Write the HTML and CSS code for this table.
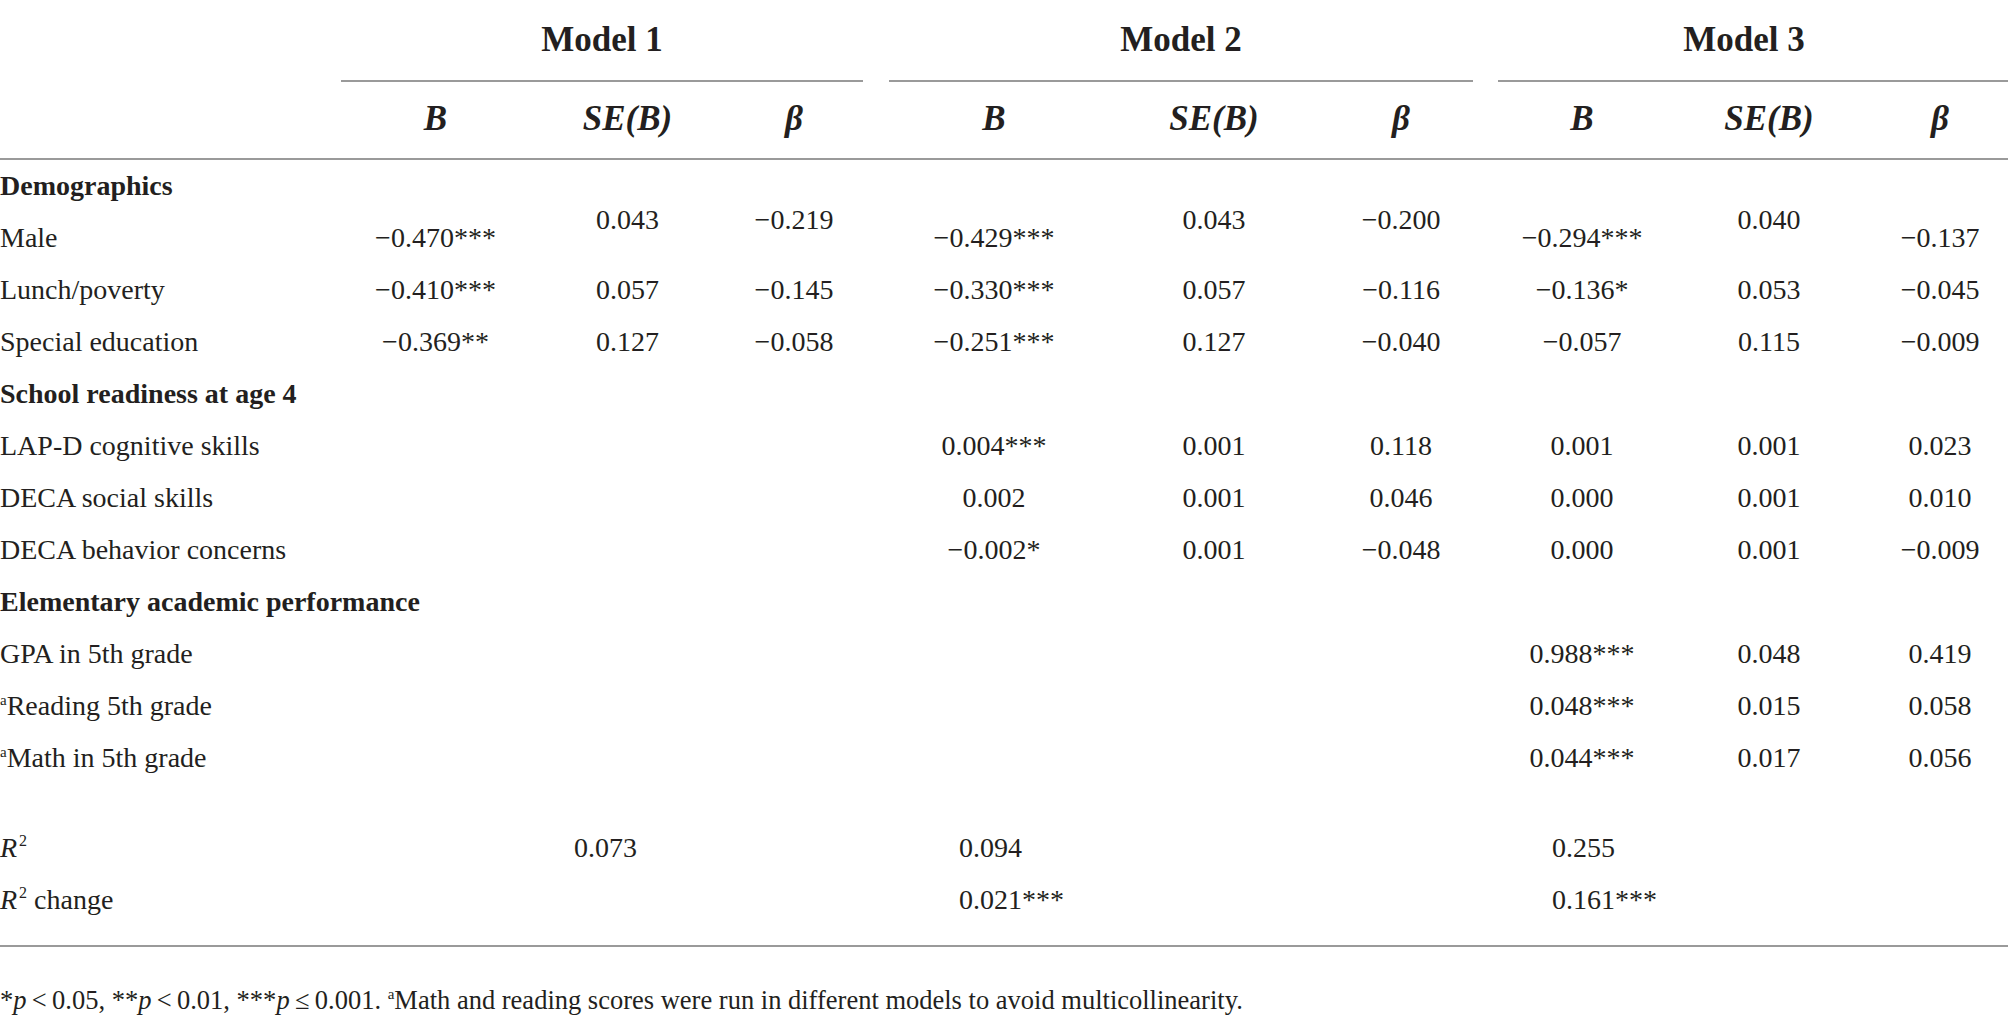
FILE: index.html
```html
<!DOCTYPE html>
<html lang="en">
<head>
<meta charset="utf-8">
<title>Regression models</title>
<link rel="stylesheet" href="styles.css">
</head>
<body>
<div class="table-wrap">
<table class="reg">
  <colgroup>
    <col class="c-label">
    <col class="c-m1b"><col class="c-m1se"><col class="c-m1beta">
    <col class="c-gap1">
    <col class="c-m2b"><col class="c-m2se"><col class="c-m2beta">
    <col class="c-gap2">
    <col class="c-m3b"><col class="c-m3se"><col class="c-m3beta">
  </colgroup>
  <thead>
    <tr class="models">
      <th></th>
      <th colspan="3" class="model">Model 1</th>
      <th class="gap"></th>
      <th colspan="3" class="model">Model 2</th>
      <th class="gap"></th>
      <th colspan="3" class="model model-last">Model 3</th>
    </tr>
    <tr class="stats">
      <th></th>
      <th>B</th><th>SE(B)</th><th>β</th>
      <th></th>
      <th>B</th><th>SE(B)</th><th>β</th>
      <th></th>
      <th>B</th><th>SE(B)</th><th>β</th>
    </tr>
  </thead>
  <tbody>
    <tr class="section"><td colspan="12">Demographics</td></tr>
    <tr>
      <td class="label">Male</td>
      <td>−0.470***</td><td class="raised">0.043</td><td class="raised">−0.219</td>
      <td></td>
      <td>−0.429***</td><td class="raised">0.043</td><td class="raised">−0.200</td>
      <td></td>
      <td>−0.294***</td><td class="raised">0.040</td><td>−0.137</td>
    </tr>
    <tr>
      <td class="label">Lunch/poverty</td>
      <td>−0.410***</td><td>0.057</td><td>−0.145</td>
      <td></td>
      <td>−0.330***</td><td>0.057</td><td>−0.116</td>
      <td></td>
      <td>−0.136*</td><td>0.053</td><td>−0.045</td>
    </tr>
    <tr>
      <td class="label">Special education</td>
      <td>−0.369**</td><td>0.127</td><td>−0.058</td>
      <td></td>
      <td>−0.251***</td><td>0.127</td><td>−0.040</td>
      <td></td>
      <td>−0.057</td><td>0.115</td><td>−0.009</td>
    </tr>
    <tr class="section"><td colspan="12">School readiness at age 4</td></tr>
    <tr>
      <td class="label">LAP-D cognitive skills</td>
      <td></td><td></td><td></td>
      <td></td>
      <td>0.004***</td><td>0.001</td><td>0.118</td>
      <td></td>
      <td>0.001</td><td>0.001</td><td>0.023</td>
    </tr>
    <tr>
      <td class="label">DECA social skills</td>
      <td></td><td></td><td></td>
      <td></td>
      <td>0.002</td><td>0.001</td><td>0.046</td>
      <td></td>
      <td>0.000</td><td>0.001</td><td>0.010</td>
    </tr>
    <tr>
      <td class="label">DECA behavior concerns</td>
      <td></td><td></td><td></td>
      <td></td>
      <td>−0.002*</td><td>0.001</td><td>−0.048</td>
      <td></td>
      <td>0.000</td><td>0.001</td><td>−0.009</td>
    </tr>
    <tr class="section"><td colspan="12">Elementary academic performance</td></tr>
    <tr>
      <td class="label">GPA in 5th grade</td>
      <td></td><td></td><td></td>
      <td></td>
      <td></td><td></td><td></td>
      <td></td>
      <td>0.988***</td><td>0.048</td><td>0.419</td>
    </tr>
    <tr>
      <td class="label"><sup class="fn">a</sup>Reading 5th grade</td>
      <td></td><td></td><td></td>
      <td></td>
      <td></td><td></td><td></td>
      <td></td>
      <td>0.048***</td><td>0.015</td><td>0.058</td>
    </tr>
    <tr>
      <td class="label"><sup class="fn">a</sup>Math in 5th grade</td>
      <td></td><td></td><td></td>
      <td></td>
      <td></td><td></td><td></td>
      <td></td>
      <td>0.044***</td><td>0.017</td><td>0.056</td>
    </tr>
    <tr class="spacer"><td colspan="12"></td></tr>
    <tr>
      <td class="label"><i>R</i><sup class="sq">2</sup></td>
      <td colspan="3" class="fit fit-m1">0.073</td>
      <td></td>
      <td colspan="3" class="fit fit-m2">0.094</td>
      <td></td>
      <td colspan="3" class="fit fit-m3">0.255</td>
    </tr>
    <tr>
      <td class="label"><i>R</i><sup class="sq">2</sup> change</td>
      <td colspan="3" class="fit fit-m1"></td>
      <td></td>
      <td colspan="3" class="fit fit-m2">0.021***</td>
      <td></td>
      <td colspan="3" class="fit fit-m3">0.161***</td>
    </tr>
  </tbody>
</table>
</div>
<p class="note">*<i>p</i>&#8201;&lt;&#8201;0.05, **<i>p</i>&#8201;&lt;&#8201;0.01, ***<i>p</i>&#8201;≤&#8201;0.001. <sup class="fn">a</sup>Math and reading scores were run in different models to avoid multicollinearity.</p>
</body>
</html>
```

FILE: styles.css
```css
html, body {
  margin: 0;
  padding: 0;
  background: #ffffff;
}

body {
  font-family: "Liberation Serif", "Times New Roman", serif;
  color: #231f20;
  font-size: 28px;
}

.table-wrap {
  width: 2008px;
  padding-bottom: 19px;
  border-bottom: 2px solid #9a9a9a;
}

.reg {
  width: 2008px;
  table-layout: fixed;
  border-collapse: separate;
  border-spacing: 0;
}

.c-label { width: 341px; }
.c-m1b { width: 189px; }
.c-m1se { width: 195px; }
.c-m1beta { width: 138px; }
.c-gap1 { width: 26px; }
.c-m2b { width: 210px; }
.c-m2se { width: 230px; }
.c-m2beta { width: 144px; }
.c-gap2 { width: 25px; }
.c-m3b { width: 168px; }
.c-m3se { width: 206px; }
.c-m3beta { width: 136px; }

.reg th,
.reg td {
  padding: 0;
  vertical-align: middle;
  text-align: center;
  white-space: nowrap;
}

.models th {
  height: 80px;
  font-size: 35px;
  font-weight: bold;
  line-height: 40px;
}

.models th.model {
  border-bottom: 2px solid #9a9a9a;
}

.models th.model-last {
  padding-right: 18px;
}

.stats th {
  height: 74px;
  font-size: 35px;
  font-weight: bold;
  font-style: italic;
  line-height: 40px;
  border-bottom: 2px solid #9a9a9a;
  padding-bottom: 2px;
}

.reg tbody tr {
  height: 52px;
}

.reg tbody td {
  height: 52px;
  line-height: 30px;
}

.reg td.label {
  text-align: left;
}

.section td {
  text-align: left;
  font-weight: bold;
}

.reg td.raised {
  vertical-align: top;
  line-height: 16px;
}

.reg tr.spacer,
.reg tr.spacer td {
  height: 38px;
}

.reg td.fit {
  text-align: left;
}

.reg td.fit-m1 { padding-left: 233px; }
.reg td.fit-m2 { padding-left: 70px; }
.reg td.fit-m3 { padding-left: 54px; }

sup.fn {
  font-size: 15px;
  vertical-align: 10px;
  line-height: 0;
}

sup.sq {
  font-size: 16px;
  vertical-align: 11px;
  line-height: 0;
  margin-left: 2px;
}

.note {
  margin: 38px 0 0 0;
  font-size: 26.5px;
  line-height: 30px;
}
```
